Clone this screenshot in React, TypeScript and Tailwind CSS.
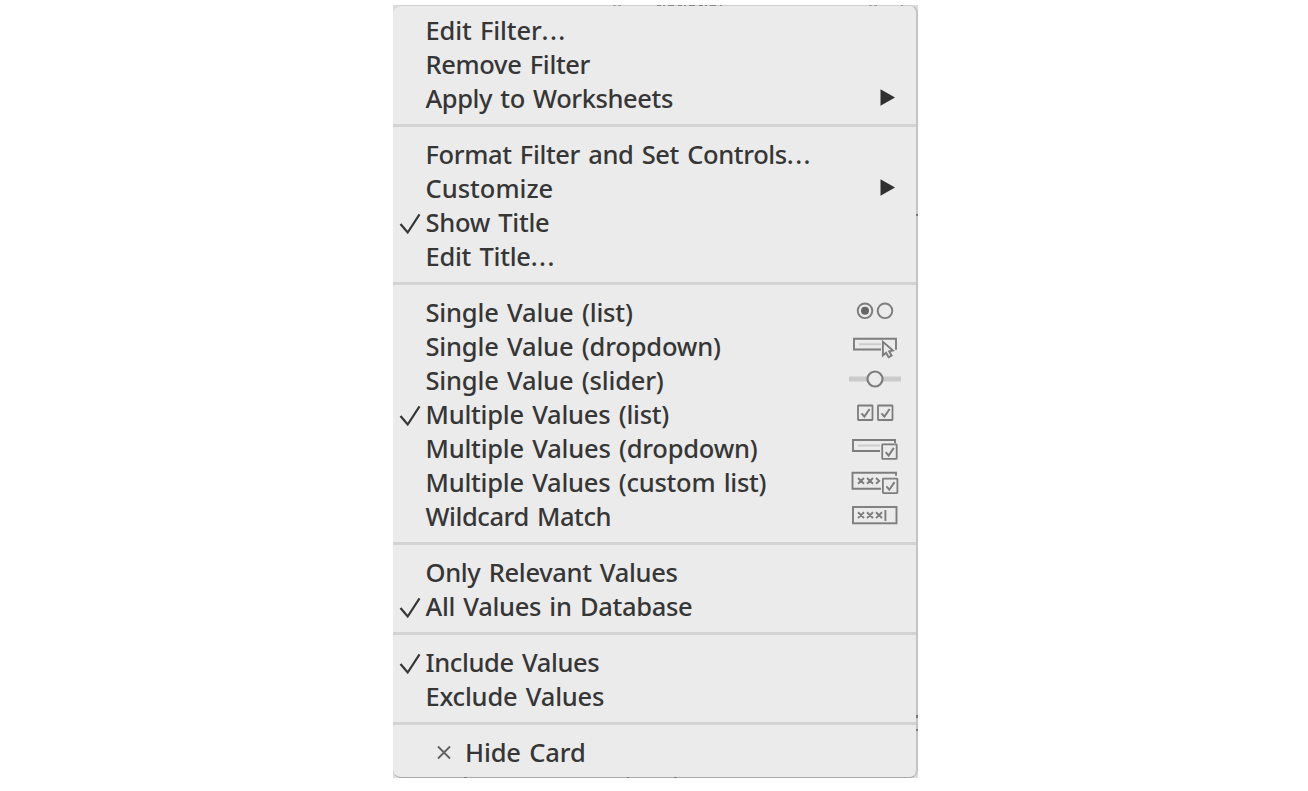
import React from "react";

type IconName = "radio" | "dropdown" | "slider" | "checks" | "checkDropdown" | "customList" | "wildcard";
type Item = {
  label: string;
  spacing: string;
  opensDialog?: boolean;
  checked?: boolean;
  submenu?: boolean;
  icon?: IconName;
  closable?: boolean;
};

const groups: Item[][] = [
  [
    { label: "Edit Filter", spacing: "tracking-[-0.15px]", opensDialog: true },
    { label: "Remove Filter", spacing: "tracking-[-0.35px]" },
    { label: "Apply to Worksheets", spacing: "tracking-[-0.41px]", submenu: true },
  ],
  [
    { label: "Format Filter and Set Controls", spacing: "tracking-[-0.38px]", opensDialog: true },
    { label: "Customize", spacing: "tracking-[0px]", submenu: true },
    { label: "Show Title", spacing: "tracking-[-0.3px]", checked: true },
    { label: "Edit Title", spacing: "tracking-[-0.26px]", opensDialog: true },
  ],
  [
    { label: "Single Value (list)", spacing: "tracking-[-0.18px]", icon: "radio" },
    { label: "Single Value (dropdown)", spacing: "tracking-[-0.19px]", icon: "dropdown" },
    { label: "Single Value (slider)", spacing: "tracking-[-0.19px]", icon: "slider" },
    { label: "Multiple Values (list)", spacing: "tracking-[-0.25px]", checked: true, icon: "checks" },
    { label: "Multiple Values (dropdown)", spacing: "tracking-[-0.23px]", icon: "checkDropdown" },
    { label: "Multiple Values (custom list)", spacing: "tracking-[-0.25px]", icon: "customList" },
    { label: "Wildcard Match", spacing: "tracking-[-0.44px]", icon: "wildcard" },
  ],
  [
    { label: "Only Relevant Values", spacing: "tracking-[-0.34px]" },
    { label: "All Values in Database", spacing: "tracking-[-0.32px]", checked: true },
  ],
  [
    { label: "Include Values", spacing: "tracking-[-0.38px]", checked: true },
    { label: "Exclude Values", spacing: "tracking-[-0.21px]" },
  ],
  [{ label: "Hide Card", spacing: "tracking-[-0.15px]", closable: true }],
];

function CheckedBox({ x, y }: { x: number; y: number }) {
  return (
    <g>
      <rect x={x} y={y} width="14.5" height="14.5" rx="0.5" fill="#ebebeb" stroke="#7d7d7d" strokeWidth="1.8" />
      <path d={`M${x + 3.5} ${y + 7.8}l2.9 3.3 5.2-7.6`} fill="none" stroke="#7d7d7d" strokeWidth="2" />
    </g>
  );
}

const crosses = (x: number, y: number) => `M${x} ${y}l6 5.8m0-5.8l-6 5.8M${x + 9} ${y}l6 5.8m0-5.8l-6 5.8`;

function ValueIcon({ name }: { name: IconName }) {
  return (
    <svg width="56" height="34" viewBox="0 0 56 34" fill="none" stroke="#7d7d7d" strokeWidth="1.9">
      {name === "radio" && (
        <>
          <circle cx="18" cy="14.8" r="7.3" />
          <circle cx="18" cy="14.8" r="4" fill="#666" stroke="none" />
          <circle cx="38" cy="14.8" r="7.3" />
        </>
      )}
      {name === "dropdown" && (
        <>
          <path d="M34 19.5H7V8.8h42v11" />
          <path d="M12 14.2h22" stroke="#ccc" strokeWidth="2" />
          <path d="M35.9 11.8v13.7l3.2-2.8 2.5 4.6 3-1.6-2.4-4.4 3.7-.8z" fill="#ebebeb" />
        </>
      )}
      {name === "slider" && (
        <>
          <path d="M2 15.1h52" stroke="#cbcbcb" strokeWidth="5" />
          <circle cx="28" cy="15" r="7.5" fill="#ebebeb" strokeWidth="2.2" />
        </>
      )}
      {name === "checks" && (
        <>
          <CheckedBox x={11} y={7.5} />
          <CheckedBox x={31} y={7.5} />
        </>
      )}
      {name === "checkDropdown" && (
        <>
          <path d="M33 19H6V8h42v3" />
          <path d="M11 13.5h22" stroke="#ccc" strokeWidth="2" />
          <CheckedBox x={35.2} y={12.4} />
        </>
      )}
      {name === "customList" && (
        <>
          <path d="M34 22.8H5.5V6.8H49v3" />
          <path d={crosses(11, 12)} />
          <path d="M29 12l3.2 2.9-3.2 2.9" />
          <CheckedBox x={35.9} y={12.6} />
        </>
      )}
      {name === "wildcard" && (
        <>
          <rect x="6" y="7" width="43.5" height="16.3" />
          <path d={crosses(11, 12.3)} />
          <path d="M29 12.3l6 5.8m0-5.8l-6 5.8M38.4 10v11" />
        </>
      )}
    </svg>
  );
}

function MenuRow({ item }: { item: Item }) {
  return (
    <li className="flex h-[34.1px] items-start">
      <span className="h-full w-[32.5px] shrink-0">
        {item.checked && (
          <svg width="33" height="34" viewBox="0 0 33 34" fill="none" stroke="#363636" strokeWidth="2.2">
            <path d="M7.5 18l7.2 8.5L26.5 8.3" />
          </svg>
        )}
      </span>
      {item.closable && (
        <svg className="shrink-0" width="39.5" height="34" viewBox="0 0 39.5 34" fill="none" stroke="#606060" strokeWidth="1.8">
          <path d="M12 10.5l12 12m0-12l-12 12" />
        </svg>
      )}
      <span className={`whitespace-pre leading-[32px] [word-spacing:2px] ${item.spacing}`}>
        {item.label}
        {item.opensDialog && <span className="tracking-[1.4px]">...</span>}
      </span>
      {item.submenu && (
        <svg className="ml-auto mr-[20.5px]" width="16" height="34" viewBox="0 0 16 34">
          <path d="M0.5 7.2v16.6l14.5-8.3z" fill="#303030" />
        </svg>
      )}
      {item.icon && (
        <span className="mr-[13px] ml-auto">
          <ValueIcon name={item.icon} />
        </span>
      )}
    </li>
  );
}

export default function App() {
  return (
    <main className="flex h-[791px] w-[1308px] bg-white pt-[5px] pl-[393px]">
      <div className="relative h-[773px] w-[525px] bg-[#dedede]">
        <div className="flex h-[773px] flex-col overflow-hidden rounded-[8px] border-y border-r-2 border-t-[#cfcfcf] border-r-[#c4c4c4] border-b-[#aaa] bg-[#ebebeb] pt-[8px] font-['Noto_Sans',sans-serif] text-[25.5px] font-medium text-[#363636]">
          {groups.map((group, index) => (
            <React.Fragment key={index}>
              {index > 0 && (
                <div className="flex h-[21.6px] shrink-0 items-start pt-[7.7px]" role="separator">
                  <span className="h-[3px] w-full bg-[#d3d3d3]" />
                </div>
              )}
              <ul>
                {group.map((item) => (
                  <MenuRow key={item.label} item={item} />
                ))}
              </ul>
            </React.Fragment>
          ))}
        </div>
        <svg className="pointer-events-none absolute inset-0" width="525" height="773" viewBox="0 0 525 773" fill="none">
          <path d="M264 .5h65" stroke="#888" strokeDasharray="4 2 2 3 6 4" />
          <path d="M220 .5h9M476 .5h10M508 .5h2" stroke="#999" strokeDasharray="3 2" />
          <path d="M71 772.5h3M281 772.5h3M234 772.5h2" stroke="#777" />
          <path d="M524 209v2M524 710v3M524 724v2" stroke="#777" strokeWidth="2" />
        </svg>
      </div>
    </main>
  );
}
